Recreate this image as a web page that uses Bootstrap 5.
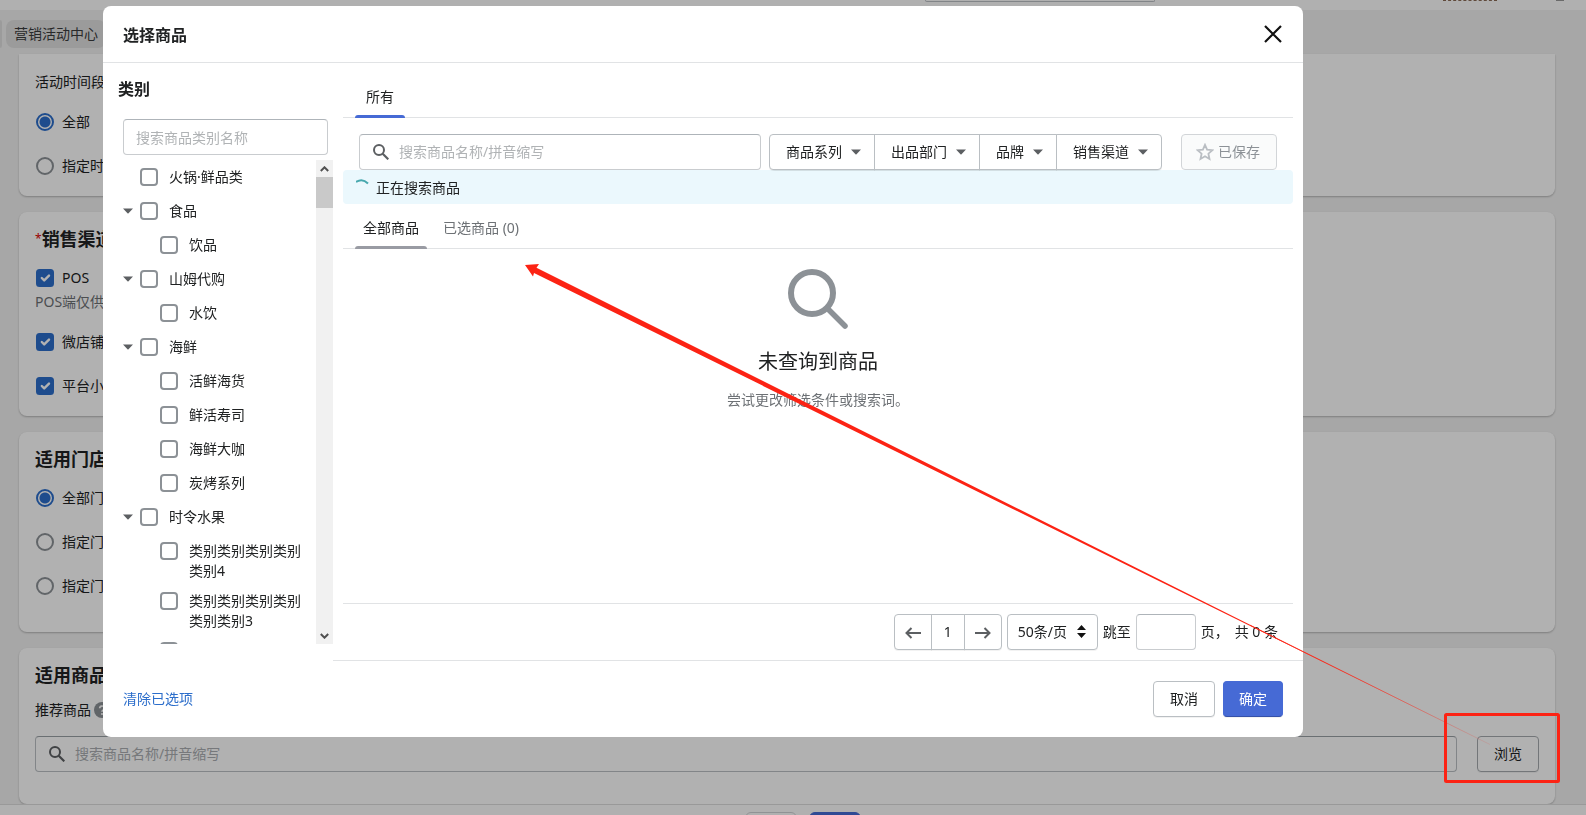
<!DOCTYPE html>
<html lang="zh-CN">
<head>
<meta charset="utf-8">
<meta name="viewport" content="width=device-width, initial-scale=1">
<title>选择商品</title>
<link href="https://cdn.jsdelivr.net/npm/bootstrap@5.3.0/dist/css/bootstrap.min.css" rel="stylesheet">
<style>
  body { font: 14px/20px "Noto Sans", "Noto Sans CJK SC", sans-serif; color: #202223; background: #f0f0f0; overflow: hidden; }
  h1, h2, h3, p { margin: 0; }
  .page { height: 100vh; overflow: hidden; }

  /* page behind the dialog */
  .topbar { height: 10px; padding-right: 22px; background: #fdfdfd; }
  .topbar-search { width: 230px; height: 2px; margin-left: 925px; border: 1px solid #babfc3; border-top: 0; border-radius: 0 0 4px 4px; }
  .topbar-user { width: 54px; height: 1px; border-bottom: 1px dashed #8a6a55; }
  .topbar-avatar { width: 8px; height: 1px; margin-left: 59px; background: #999; }
  .crumbs { height: 44px; padding-top: 10px; gap: 4px; }
  .crumb { height: 28px; padding: 4px 8px; background: #dfdfdf; border-radius: 8px; color: #3a3c3d; text-decoration: none; }
  .crumb-prev { width: 2px; padding: 0; border-radius: 0 8px 8px 0; }
  .panels { padding: 0 31px 0 19px; gap: 16px; }
  .panel { background: #fefefe; border-radius: 8px; padding: 15px 16px 20px; box-shadow: 0 1px 2px rgba(0,0,0,.25); }
  .panel-first { border-radius: 0 0 8px 8px; padding-top: 18px; }
  .panel h2 { font-size: 18px; line-height: 24px; font-weight: 700; }
  .panel .star { color: #d00; font-size: 12px; font-weight: 400; }
  .panel .hint { color: #6d7175; line-height: 24px; padding-top: 2px; }
  .choice { height: 20px; gap: 8px; margin-top: 24px; }
  .choice-first { margin-top: 17px; }
  .panel-first .choice-first { margin-top: 20px; }
  .hint + .choice { margin-top: 18px; }
  .panel .form-check-input, .tree .form-check-input { width: 18px; height: 18px; margin: 0; border: 2px solid #8c9196; background-color: #fff; flex: none; }
  .panel .form-check-input { background-color: transparent; margin-left: 1px; }
  .panel .form-check-input:checked { border-color: #2c6ecb; }
  .panel .form-check-input[type=checkbox]:checked { background-color: #2c6ecb; background-size: 16px; }
  .panel .form-check-input[type=radio]:checked { background-image: radial-gradient(circle, #2c6ecb 5px, transparent 6px); }
  .rec-label { margin-top: 13px; gap: 3px; }
  .field { height: 36px; border: 1px solid #c9cccf; border-top-color: #aeb4b9; border-radius: 4px; background: transparent; }
  .field input, input.field { font-size: 14px; color: #202223; outline: 0; }
  .field input { border: 0; background: transparent; min-width: 0; }
  ::placeholder { color: #b0b3b5 !important; opacity: 1; }
  .panel ::placeholder { color: #a9adb0 !important; }
  .panel .field { border-color: #babfc3; border-top-color: #999fa4; padding-left: 13px; }
  .plain { height: 36px; padding: 0 16px; font-size: 14px; line-height: 20px; border: 1px solid #babfc3; border-radius: 4px; background: #fff; color: #202223; box-shadow: 0 1px 0 rgba(0,0,0,.05); }
  .panel .plain { background: transparent; border-color: #a5aaae; }
  .actionbar { border-top: 1px solid #dcdcdc; background: #fdfdfd; padding: 7px 0 0 20px; gap: 12px; flex: none; }
  .actionbar button { width: 52px; height: 32px; padding: 0; border-radius: 6px; font-size: 14px; }
  .actionbar .btn-primary { background: #466ad5; border-color: #466ad5; }
  .actionbar .btn-outline-secondary { border-color: #cfd1d4; }

  .shade { position: fixed; inset: 0; background: rgba(0,0,0,.3); }

  /* dialog */
  .modal { overflow: hidden; }
  .modal .modal-dialog { max-width: 1200px; margin: 6px 103px; }
  .modal-content { border: 0; border-radius: 8px; overflow: hidden; }
  .modal .modal-header { height: 57px; padding: 0 20px; border-bottom: 1px solid #e1e3e5; border-radius: 0; }
  .modal-header h1 { font-size: 16px; line-height: 24px; font-weight: 700; padding-top: 2px; }
  .closer { border: 0; background: none; padding: 0; width: 20px; height: 20px; line-height: 0; }
  .side { width: 230px; padding: 14px 0 0 15px; flex: none; }
  .side h2 { font-size: 16px; line-height: 24px; font-weight: 700; }
  .side .field { width: 205px; padding: 0 12px; margin: 18px 0 0 5px; border-top-color: #aeb4b9; }
  .tree-wrap { height: 484px; margin-top: 5px; }
  .tree { overflow: hidden; padding: 0 0 0 7px; margin: 0; list-style: none; }
  .tree ul { list-style: none; padding: 0 0 0 20px; margin: 0; }
  .node { min-height: 34px; padding: 7px 0 3px; gap: 11px; }
  .node .form-check-input { margin-top: 1px; border-radius: 4px; }
  .node label { padding-right: 12px; }
  .twist { width: 10px; flex: none; margin: 7px -4px 0 -2px; padding: 0; border: 0; background: none; line-height: 0; }
  .twist-none { visibility: hidden; }
  .sbar { width: 17px; background: #f1f1f1; }
  .sbar span { height: 17px; line-height: 0; padding: 6px 4px; }
  .sbar .thumb { height: 31px; background: #c9c9c9; }

  .main { padding: 29px 10px 0; min-width: 0; }
  .tabs { border-bottom: 1px solid #e1e3e5; padding: 0 12px; }
  .tabs button { border: 0; background: none; padding: 0; color: #6d7175; position: relative; white-space: nowrap; }
  .tabs .on { color: #202223; }
  .tabs .on::after { content: ""; position: absolute; left: 0; right: 0; bottom: -1px; height: 3px; background: #466ad5; border-radius: 3px 3px 0 0; }
  .tabs-main button { height: 25px; padding: 0 11px 15px; line-height: 10px; }
  .tabs-list button { height: 44px; padding: 4px 8px 0; line-height: 20px; }
  .tabs-list .on::after { background: #999ba3; }
  .filters { padding: 16px 16px 0; }
  .filters .field { padding-left: 13px; gap: 8px; }
  .filters .btn-group { margin: 0 19px 0 8px; box-shadow: 0 1px 0 rgba(0,0,0,.05); }
  .filters .plain { display: flex; align-items: center; gap: 9px; }
  .filters .btn-group .plain { border-radius: 0; margin-left: -1px; padding: 0 13px 0 16px; }
  .filters .btn-group .plain:first-child { border-radius: 4px 0 0 4px; margin-left: 0; }
  .filters .btn-group .plain:last-child { border-radius: 0 4px 4px 0; }
  .filters .saved { color: #8c9196; background: #fafbfb; border-color: #d2d5d8; padding: 0 16px 0 14px; gap: 4px; box-shadow: none; }
  .busy { height: 34px; background: #ebf8fd; border-radius: 4px; padding: 1px 13px 0; gap: 6px; }
  .empty { height: 354px; padding-top: 20px; }
  .empty h3 { font-size: 20px; line-height: 28px; font-weight: 400; margin-top: 19px; }
  .empty p { color: #6d7175; margin-top: 14px; }
  .pager { border-top: 1px solid #e1e3e5; height: 57px; padding: 0 15px 1px 0; }
  .pager .btn-group .plain { padding: 0; width: 38px; margin-left: -1px; border-radius: 0; }
  .pager .btn-group .plain:first-child { border-radius: 4px 0 0 4px; margin-left: 0; }
  .pager .btn-group .plain:last-child { border-radius: 0 4px 4px 0; }
  .pager .btn-group .num { width: 34px; }
  .pager .sizes { position: relative; margin: 0 5px; }
  .pager select { width: 91px; padding: 0 10px; appearance: none; }
  .pager .sizes svg { position: absolute; right: 12px; top: 11px; pointer-events: none; }
  .pager .goto { width: 60px; margin: 0 5px; border-top-color: #aeb4b9; }
  .pager .total { margin-left: 6px; }
  .modal .modal-footer { margin-left: 230px; border-top: 1px solid #e1e3e5; border-radius: 0; padding: 0; }
  .foot { height: 76px; padding: 0 20px; }
  .foot a { color: #2c6ecb; text-decoration: none; }
  .foot .plain { padding: 0; }
  .foot .ok { background: #466ad5; border-color: #466ad5; border-bottom-color: #3551a8; color: #fff; width: 60px; }
  .foot .no { width: 62px; margin-right: 8px; }
  .marks { position: fixed; left: 0; top: 0; z-index: 1100; pointer-events: none; }
</style>
</head>
<body>
<svg class="d-none">
  <symbol id="mag" viewBox="0 0 16 16"><circle cx="6" cy="6" r="5" fill="none" stroke="currentColor" stroke-width="2"/><path d="M9.700 9.700 15.300 15.300" stroke="currentColor" stroke-width="2.200"/></symbol>
  <symbol id="down" viewBox="0 0 10 6"><path d="M0 .5h10L5.500 5.300q-.5.4-1 0z" fill="#5c5f62"/></symbol>
</svg>

<div class="page d-flex flex-column">
  <header class="topbar d-flex flex-shrink-0"><div class="topbar-search me-auto"></div><div class="topbar-user"></div><div class="topbar-avatar"></div></header>
  <nav class="crumbs d-flex flex-shrink-0">
    <a class="crumb crumb-prev" href="#" aria-label="上一页"></a>
    <a class="crumb" href="#">营销活动中心</a>
  </nav>
  <main class="panels d-flex flex-column">
    <section class="panel panel-first">
      <div>活动时间段</div>
      <div class="choice choice-first d-flex align-items-center"><input class="form-check-input" type="radio" name="time" id="t1" checked><label for="t1">全部</label></div>
      <div class="choice d-flex align-items-center"><input class="form-check-input" type="radio" name="time" id="t2"><label for="t2">指定时</label></div>
    </section>
    <section class="panel">
      <h2 class="d-flex"><span class="star">*</span>销售渠道</h2>
      <div class="choice choice-first d-flex align-items-center"><input class="form-check-input" type="checkbox" id="c1" checked><label for="c1">POS</label></div>
      <p class="hint">POS端仅供</p>
      <div class="choice d-flex align-items-center"><input class="form-check-input" type="checkbox" id="c2" checked><label for="c2">微店铺</label></div>
      <div class="choice d-flex align-items-center"><input class="form-check-input" type="checkbox" id="c3" checked><label for="c3">平台小</label></div>
    </section>
    <section class="panel">
      <h2>适用门店</h2>
      <div class="choice choice-first d-flex align-items-center"><input class="form-check-input" type="radio" name="shop" id="s1" checked><label for="s1">全部门</label></div>
      <div class="choice d-flex align-items-center"><input class="form-check-input" type="radio" name="shop" id="s2"><label for="s2">指定门</label></div>
      <div class="choice mb-3 d-flex align-items-center"><input class="form-check-input" type="radio" name="shop" id="s3"><label for="s3">指定门</label></div>
    </section>
    <section class="panel pb-3">
      <h2>适用商品</h2>
      <div class="rec-label d-flex align-items-center">推荐商品
        <svg width="16" height="16" viewBox="0 0 16 16"><circle cx="8" cy="8" r="8" fill="#8c9196"/><path d="M5.700 6.200a2.300 2.200 0 1 1 3.300 2c-.7.4-1 .7-1 1.600" fill="none" stroke="#fff" stroke-width="1.700"/><circle cx="8" cy="12" r="1.100" fill="#fff"/></svg>
      </div>
      <div class="d-flex mt-3 pb-3">
        <div class="field flex-grow-1 d-flex align-items-center gap-2 me-3">
          <svg width="16" height="16" color="#5c5f62"><use href="#mag"/></svg>
          <input class="flex-grow-1" type="text" placeholder="搜索商品名称/拼音缩写" aria-label="搜索推荐商品">
        </div>
        <button class="plain ms-1" type="button">浏览</button>
      </div>
    </section>
  </main>
  <footer class="actionbar d-flex justify-content-center">
    <button class="btn btn-outline-secondary" type="button" aria-label="返回"></button>
    <button class="btn btn-primary" type="button" aria-label="保存"></button>
  </footer>
</div>
<div class="shade"></div>

<div class="modal d-block" role="dialog" aria-labelledby="dlg">
  <div class="modal-dialog">
    <div class="modal-content">
      <div class="modal-header">
        <h1 id="dlg">选择商品</h1>
        <button class="closer" type="button" aria-label="关闭"><svg width="18" height="18" viewBox="0 0 18 18"><path d="M1 1 17 17M17 1 1 17" stroke="#111" stroke-width="2.200"/></svg></button>
      </div>
      <div class="d-flex">
        <aside class="side">
          <h2>类别</h2>
          <input class="field" type="text" placeholder="搜索商品类别名称" aria-label="搜索商品类别名称">
          <div class="tree-wrap d-flex">
            <ul class="tree flex-grow-1" id="tree"></ul>
            <div class="sbar d-flex flex-column">
              <span><svg width="9" height="6" viewBox="0 0 9 6"><path d="M.8 5 4.500 1.300 8.200 5" fill="none" stroke="#505050" stroke-width="2"/></svg></span>
              <span class="thumb"></span>
              <span class="mt-auto"><svg width="9" height="6" viewBox="0 0 9 6"><path d="M.8 1 4.500 4.700 8.200 1" fill="none" stroke="#505050" stroke-width="2"/></svg></span>
            </div>
          </div>
        </aside>
        <section class="main flex-grow-1">
          <div class="tabs tabs-main d-flex"><button class="on" type="button">所有</button></div>
          <div class="filters d-flex">
            <div class="field flex-grow-1 d-flex align-items-center">
              <svg width="16" height="16" color="#5c5f62"><use href="#mag"/></svg>
              <input class="flex-grow-1" type="text" placeholder="搜索商品名称/拼音缩写" aria-label="搜索商品">
            </div>
            <div class="btn-group">
              <button class="plain" type="button">商品系列<svg width="10" height="6"><use href="#down"/></svg></button>
              <button class="plain" type="button">出品部门<svg width="10" height="6"><use href="#down"/></svg></button>
              <button class="plain" type="button">品牌<svg width="10" height="6"><use href="#down"/></svg></button>
              <button class="plain" type="button">销售渠道<svg width="10" height="6"><use href="#down"/></svg></button>
            </div>
            <button class="plain saved" type="button" disabled><svg width="18" height="18" viewBox="0 0 18 18"><path d="M9 1.800 11.100 6.700 16.300 7.200 12.400 10.700 13.500 16 9 13.300 4.500 16 5.600 10.700 1.700 7.200 6.900 6.700Z" fill="none" stroke="#babec3" stroke-width="1.800"/></svg>已保存</button>
          </div>
          <div class="busy d-flex align-items-center" role="status">
            <svg width="14" height="20" viewBox="0 0 14 20"><path d="M0 4Q6.500 0 12 5.500" fill="none" stroke="#47a8ae" stroke-width="2"/></svg>正在搜索商品
          </div>
          <div class="tabs tabs-list d-flex gap-2"><button class="on" type="button">全部商品</button><button type="button">已选商品 (0)</button></div>
          <div class="empty text-center">
            <svg class="d-block mx-auto" width="60" height="60" viewBox="0 0 60 60"><circle cx="24" cy="24" r="21" fill="none" stroke="#8c9196" stroke-width="6"/><path d="M39.500 39.500 57 57" stroke="#8c9196" stroke-width="5.500" stroke-linecap="round"/></svg>
            <h3>未查询到商品</h3>
            <p>尝试更改筛选条件或搜索词。</p>
          </div>
          <div class="pager d-flex align-items-center justify-content-end">
            <div class="btn-group">
              <button class="plain" type="button" aria-label="上一页"><svg width="16" height="12" viewBox="0 0 16 12"><path d="M16 6H1.500M6.500 1 1.500 6l5 5" fill="none" stroke="#5c5f62" stroke-width="2"/></svg></button>
              <button class="plain num" type="button">1</button>
              <button class="plain" type="button" aria-label="下一页"><svg width="16" height="12" viewBox="0 0 16 12"><path d="M0 6h14.500M9.500 1l5 5-5 5" fill="none" stroke="#5c5f62" stroke-width="2"/></svg></button>
            </div>
            <div class="sizes">
              <select class="plain" aria-label="每页条数"><option>50条/页</option></select>
              <svg width="9" height="13" viewBox="0 0 9 13"><path d="M0 5 4.500 0 9 5zM0 8l4.500 5L9 8z" fill="#111"/></svg>
            </div>
            <label for="goto">跳至</label>
            <input class="field goto" id="goto" type="text">
            <span>页，</span><span class="total">共 0 条</span>
          </div>
        </section>
      </div>
      <div class="modal-footer"></div>
      <div class="foot d-flex align-items-center">
        <a class="me-auto" href="#">清除已选项</a>
        <button class="plain no" type="button">取消</button>
        <button class="plain ok" type="button">确定</button>
      </div>
    </div>
  </div>
</div>

<!-- callout from the browse button to the list -->
<svg class="marks" width="1586" height="815" viewBox="0 0 1586 815" aria-hidden="true">
  <defs><linearGradient id="fade" gradientUnits="userSpaceOnUse" x1="1280" y1="640" x2="1485" y2="742"><stop offset="0" stop-color="#fc2314"/><stop offset="1" stop-color="#fc2314" stop-opacity=".15"/></linearGradient></defs>
  <path d="M525 265 539 264 536.500 267.800 1280 639.700 1490 744.500 1280 640.700 534 273 533 276.500Z" fill="url(#fade)"/>
  <path d="M1250 625.200 1490 744.500" stroke="url(#fade)" stroke-width=".8"/>
  <rect x="1445.500" y="714.500" width="113" height="67" rx="1" fill="none" stroke="#fc2314" stroke-width="3"/>
</svg>

<script src="https://cdn.jsdelivr.net/npm/bootstrap@5.3.0/dist/js/bootstrap.bundle.min.js"></script>
<script>
  const data = [
    ['火锅·鲜品类', []],
    ['食品', ['饮品']],
    ['山姆代购', ['水饮']],
    ['海鲜', ['活鲜海货', '鲜活寿司', '海鲜大咖', '炭烤系列']],
    ['时令水果', ['类别类别类别类别类别4', '类别类别类别类别类别类别3', '']]
  ];
  let n = 0;
  const node = (name, open) => {
    n++;
    return `<div class="node d-flex align-items-start"><button type="button" class="twist${open ? '' : ' twist-none'}" aria-label="展开"><svg width="10" height="6"><use href="#down"/></svg></button>` +
      `<input class="form-check-input" type="checkbox" id="n${n}"><label for="n${n}">${name}</label></div>`;
  };
  document.getElementById('tree').innerHTML = data.map(([name, kids]) =>
    `<li>${node(name, kids.length)}${kids.length ? '<ul>' + kids.map(k => `<li>${node(k)}</li>`).join('') + '</ul>' : ''}</li>`).join('');
</script>
</body>
</html>
